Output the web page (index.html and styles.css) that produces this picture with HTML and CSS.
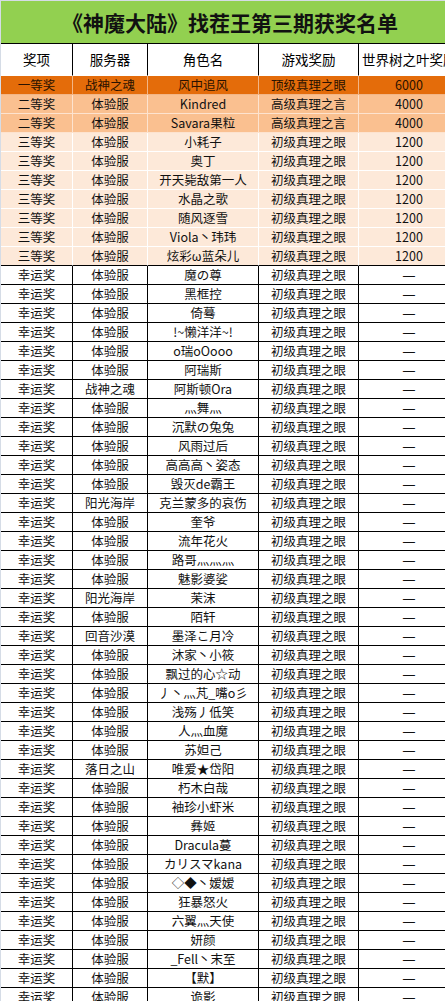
FILE: index.html
```html
<!DOCTYPE html>
<html lang="zh-CN">
<head>
<meta charset="utf-8">
<title>《神魔大陆》找茬王第三期获奖名单</title>
<link rel="stylesheet" href="styles.css">
</head>
<body>
<div class="sheet">
<table class="award">
<colgroup>
<col class="c1"><col class="c2"><col class="c3"><col class="c4"><col class="c5">
</colgroup>
<thead>
<tr class="title-row"><th colspan="5" class="title">《神魔大陆》找茬王第三期获奖名单</th></tr>
<tr class="head-row"><th>奖项</th><th>服务器</th><th>角色名</th><th>游戏奖励</th><th class="leaf">世界树之叶奖励</th></tr>
</thead>
<tbody>
<tr class="p1"><td>一等奖</td><td>战神之魂</td><td>风中追风</td><td>顶级真理之眼</td><td>6000</td></tr>
<tr class="p2"><td>二等奖</td><td>体验服</td><td>Kindred</td><td>高级真理之言</td><td>4000</td></tr>
<tr class="p2"><td>二等奖</td><td>体验服</td><td>Savara果粒</td><td>高级真理之言</td><td>4000</td></tr>
<tr class="p3"><td>三等奖</td><td>体验服</td><td>小耗子</td><td>初级真理之眼</td><td>1200</td></tr>
<tr class="p3"><td>三等奖</td><td>体验服</td><td>奥丁</td><td>初级真理之眼</td><td>1200</td></tr>
<tr class="p3"><td>三等奖</td><td>体验服</td><td>开天毙敌第一人</td><td>初级真理之眼</td><td>1200</td></tr>
<tr class="p3"><td>三等奖</td><td>体验服</td><td>水晶之歌</td><td>初级真理之眼</td><td>1200</td></tr>
<tr class="p3"><td>三等奖</td><td>体验服</td><td>随风逐雪</td><td>初级真理之眼</td><td>1200</td></tr>
<tr class="p3"><td>三等奖</td><td>体验服</td><td>Viola丶玮玮</td><td>初级真理之眼</td><td>1200</td></tr>
<tr class="p3 last3"><td>三等奖</td><td>体验服</td><td>炫彩ω蓝朵儿</td><td>初级真理之眼</td><td>1200</td></tr>
<tr><td>幸运奖</td><td>体验服</td><td>魔の尊</td><td>初级真理之眼</td><td class="dash">—</td></tr>
<tr><td>幸运奖</td><td>体验服</td><td>黑框控</td><td>初级真理之眼</td><td class="dash">—</td></tr>
<tr><td>幸运奖</td><td>体验服</td><td>倚蓦</td><td>初级真理之眼</td><td class="dash">—</td></tr>
<tr><td>幸运奖</td><td>体验服</td><td>!~懒洋洋~!</td><td>初级真理之眼</td><td class="dash">—</td></tr>
<tr><td>幸运奖</td><td>体验服</td><td>o瑞oOooo</td><td>初级真理之眼</td><td class="dash">—</td></tr>
<tr><td>幸运奖</td><td>体验服</td><td>阿瑞斯</td><td>初级真理之眼</td><td class="dash">—</td></tr>
<tr><td>幸运奖</td><td>战神之魂</td><td>阿斯顿Ora</td><td>初级真理之眼</td><td class="dash">—</td></tr>
<tr><td>幸运奖</td><td>体验服</td><td>灬舞灬</td><td>初级真理之眼</td><td class="dash">—</td></tr>
<tr><td>幸运奖</td><td>体验服</td><td>沉默の兔兔</td><td>初级真理之眼</td><td class="dash">—</td></tr>
<tr><td>幸运奖</td><td>体验服</td><td>风雨过后</td><td>初级真理之眼</td><td class="dash">—</td></tr>
<tr><td>幸运奖</td><td>体验服</td><td>高高高丶姿态</td><td>初级真理之眼</td><td class="dash">—</td></tr>
<tr><td>幸运奖</td><td>体验服</td><td>毁灭de霸王</td><td>初级真理之眼</td><td class="dash">—</td></tr>
<tr><td>幸运奖</td><td>阳光海岸</td><td>克兰蒙多的哀伤</td><td>初级真理之眼</td><td class="dash">—</td></tr>
<tr><td>幸运奖</td><td>体验服</td><td>奎爷</td><td>初级真理之眼</td><td class="dash">—</td></tr>
<tr><td>幸运奖</td><td>体验服</td><td>流年花火</td><td>初级真理之眼</td><td class="dash">—</td></tr>
<tr><td>幸运奖</td><td>体验服</td><td>路哥灬灬灬</td><td>初级真理之眼</td><td class="dash">—</td></tr>
<tr><td>幸运奖</td><td>体验服</td><td>魅影婆娑</td><td>初级真理之眼</td><td class="dash">—</td></tr>
<tr><td>幸运奖</td><td>阳光海岸</td><td>茉沫</td><td>初级真理之眼</td><td class="dash">—</td></tr>
<tr><td>幸运奖</td><td>体验服</td><td>陌轩</td><td>初级真理之眼</td><td class="dash">—</td></tr>
<tr><td>幸运奖</td><td>回音沙漠</td><td>墨泽こ月冷</td><td>初级真理之眼</td><td class="dash">—</td></tr>
<tr><td>幸运奖</td><td>体验服</td><td>沐家丶小筱</td><td>初级真理之眼</td><td class="dash">—</td></tr>
<tr><td>幸运奖</td><td>体验服</td><td>飘过的心☆动</td><td>初级真理之眼</td><td class="dash">—</td></tr>
<tr><td>幸运奖</td><td>体验服</td><td>丿丶灬芃_嘴o彡</td><td>初级真理之眼</td><td class="dash">—</td></tr>
<tr><td>幸运奖</td><td>体验服</td><td>浅殇丿低笑</td><td>初级真理之眼</td><td class="dash">—</td></tr>
<tr><td>幸运奖</td><td>体验服</td><td>人灬血魔</td><td>初级真理之眼</td><td class="dash">—</td></tr>
<tr><td>幸运奖</td><td>体验服</td><td>苏妲己</td><td>初级真理之眼</td><td class="dash">—</td></tr>
<tr><td>幸运奖</td><td>落日之山</td><td>唯爱★岱阳</td><td>初级真理之眼</td><td class="dash">—</td></tr>
<tr><td>幸运奖</td><td>体验服</td><td>朽木白哉</td><td>初级真理之眼</td><td class="dash">—</td></tr>
<tr><td>幸运奖</td><td>体验服</td><td>袖珍小虾米</td><td>初级真理之眼</td><td class="dash">—</td></tr>
<tr><td>幸运奖</td><td>体验服</td><td>彝姬</td><td>初级真理之眼</td><td class="dash">—</td></tr>
<tr><td>幸运奖</td><td>体验服</td><td>Dracula蔓</td><td>初级真理之眼</td><td class="dash">—</td></tr>
<tr><td>幸运奖</td><td>体验服</td><td>カリスマkana</td><td>初级真理之眼</td><td class="dash">—</td></tr>
<tr><td>幸运奖</td><td>体验服</td><td>◇◆丶嫒嫒</td><td>初级真理之眼</td><td class="dash">—</td></tr>
<tr><td>幸运奖</td><td>体验服</td><td>狂暴怒火</td><td>初级真理之眼</td><td class="dash">—</td></tr>
<tr><td>幸运奖</td><td>体验服</td><td>六翼灬天使</td><td>初级真理之眼</td><td class="dash">—</td></tr>
<tr><td>幸运奖</td><td>体验服</td><td>妍颜</td><td>初级真理之眼</td><td class="dash">—</td></tr>
<tr><td>幸运奖</td><td>体验服</td><td>_Fell丶末至</td><td>初级真理之眼</td><td class="dash">—</td></tr>
<tr><td>幸运奖</td><td>体验服</td><td>【默】</td><td>初级真理之眼</td><td class="dash">—</td></tr>
<tr><td>幸运奖</td><td>体验服</td><td>诡影</td><td>初级真理之眼</td><td class="dash">—</td></tr>
</tbody>
</table>
</div>
</body>
</html>
```
FILE: styles.css
```css
html, body {
  margin: 0;
  padding: 0;
  background: #ffffff;
}
body {
  width: 445px;
  height: 1001px;
  overflow: hidden;
}
.sheet {
  box-sizing: border-box;
  background: #d5dce6;
  padding: 1px 0 0 1px;
  width: 445px;
}
.award {
  border-collapse: separate;
  border-spacing: 0;
  table-layout: fixed;
  width: 444px;
  background: #ffffff;
  font-family: "Noto Sans CJK SC", "Noto Sans", sans-serif;
  color: #111;
}
.c1 { width: 72px; }
.c2 { width: 75px; }
.c3 { width: 111px; }
.c4 { width: 100px; }
.c5 { width: 86px; }

.award th, .award td {
  padding: 0;
  text-align: center;
  white-space: nowrap;
  border-right: 1px solid #000;
  border-bottom: 1px solid #000;
  vertical-align: middle;
}
.award th:last-child, .award td:last-child {
  border-right: none;
}
.award td:last-child {
  padding-left: 14px;
}
.title-row .title {
  height: 42px;
  background: #92d050;
  font-size: 21px;
  font-weight: 700;
  color: #111;
  line-height: 42px;
  padding-left: 14px;
}
.head-row th {
  height: 31px;
  font-size: 13.5px;
  font-weight: 400;
  line-height: 31px;
  color: #000;
  border-bottom-color: #ffffff;
}
.head-row th.leaf {
  text-align: left;
  padding-left: 3px;
}
.award td {
  height: 18px;
  font-size: 12.5px;
  line-height: 18px;
}
.p1 td {
  background: #e46c0a;
  border-color: #f3b585;
  color: #2a1200;
}
.p2 td {
  background: #fac090;
  border-color: #fde3cf;
}
.p3 td {
  background: #fde9d9;
  border-color: #ffffff;
}
.p3.last3 td {
  border-bottom-color: #000;
}
.award td.dash {
  font-size: 15px;
}
```
